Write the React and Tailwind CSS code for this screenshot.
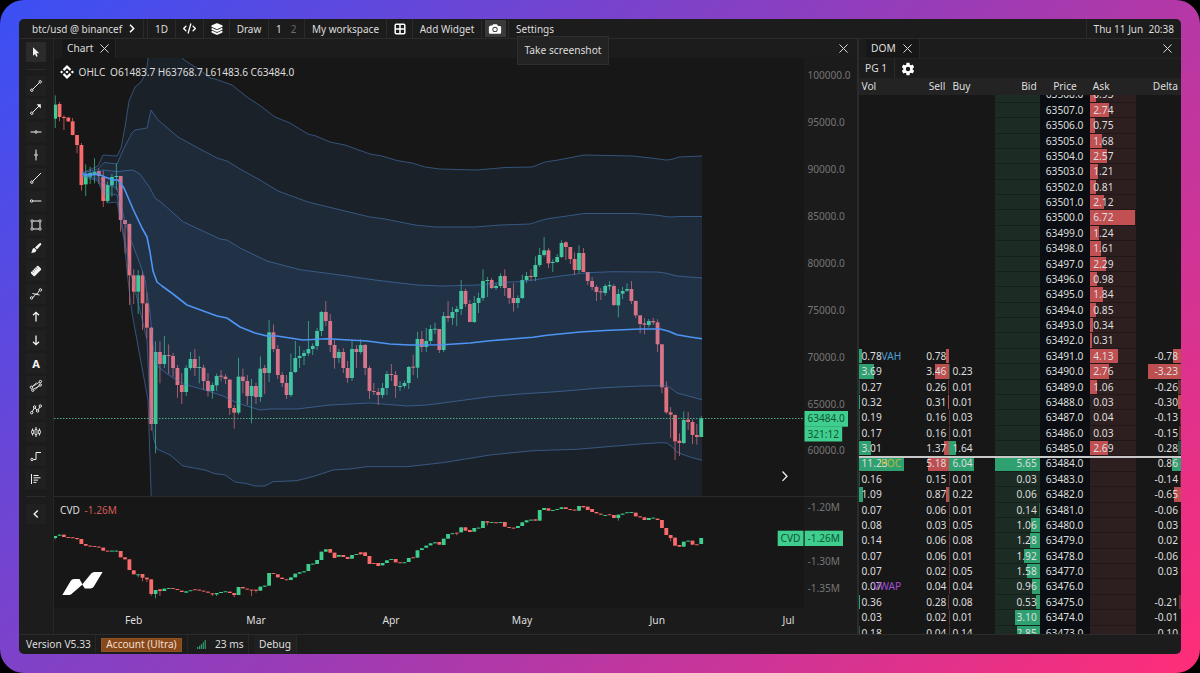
import React from 'react';
import { FaCode } from 'react-icons/fa6';
import { IoCamera, IoLayers, IoSettingsSharp } from 'react-icons/io5';
import { SiBinance } from 'react-icons/si';

const UP = '#3ecf8e';
const DOWN = '#fb6a6b';

// Candles are [open, close, high, low] in thirds of a pixel, grouped by vertical origin.
const shift = (origin, rows) => rows.map((row) => row.map((v) => origin + v / 3));

const CANDLES = [
    ...shift(0, [
        [356, 314, 286, 384], [312, 351, 306, 364], [351, 354, 346, 390], [353, 364, 351, 366],
        [364, 405, 354, 406], [405, 435, 405, 460], [435, 555, 429, 572], [553, 524, 493, 588],
        [530, 519, 500, 552], [525, 515, 475, 550], [513, 528, 505, 552], [531, 603, 512, 621],
        [603, 555, 545, 608], [556, 531, 522, 590], [531, 528, 490, 570], [528, 660, 528, 695],
    ]),
    ...shift(200 , [
        [60, 72, 60, 160], [72, 226, 70, 315], [226, 275, 208, 312], [275, 226, 210, 342],
        [226, 310, 214, 390], [310, 383, 277, 415], [383, 672, 380, 692], [672, 456, 424, 760],
    ]),
    ...shift(280, [
        [216, 252, 184, 310], [252, 225, 168, 264], [225, 228, 193, 282], [228, 264, 219, 290],
        [264, 315, 255, 353], [315, 336, 279, 372], [336, 264, 256, 348], [264, 237, 216, 270],
        [237, 264, 207, 288], [264, 261, 228, 310], [263, 303, 254, 330], [303, 333, 279, 350],
        [333, 315, 308, 356], [316, 288, 281, 333], [287, 290, 270, 304], [290, 297, 283, 312],
        [299, 384, 297, 405], [384, 398, 375, 446], [398, 290, 233, 404], [290, 303, 266, 340],
        [303, 348, 285, 375], [348, 318, 297, 430], [318, 351, 308, 372], [351, 266, 229, 366],
        [264, 279, 255, 342], [279, 157, 120, 306], [157, 207, 133, 216], [207, 285, 195, 297],
        [285, 309, 276, 321], [309, 345, 285, 357], [345, 276, 221, 351], [276, 234, 183, 279],
        [234, 228, 198, 264], [228, 219, 210, 255], [220, 207, 123, 228], [207, 198, 190, 225],
        [198, 153, 144, 210], [153, 96, 93, 168], [96, 123, 63, 138], [123, 195, 102, 216],
        [195, 234, 180, 266], [234, 216, 207, 249], [216, 264, 204, 279], [264, 294, 243, 309],
        [294, 207, 183, 303], [207, 216, 195, 264], [216, 195, 178, 222], [195, 264, 192, 285],
        [264, 333, 257, 357], [333, 336, 309, 345], [336, 345, 324, 375], [345, 324, 309, 354],
        [324, 282, 273, 345], [282, 285, 252, 303], [285, 318, 273, 354], [321, 318, 303, 333],
        [318, 309, 302, 325], [309, 261, 258, 327], [260, 263, 224, 285], [263, 177, 156, 294],
        [177, 201, 153, 216], [201, 183, 144, 216], [183, 147, 135, 192], [149, 146, 128, 162],
        [147, 210, 147, 219], [210, 108, 96, 216],
    ]),
    ...shift(220, [
        [288, 294, 243, 306], [294, 276, 261, 315], [276, 267, 258, 318], [267, 213, 180, 285],
        [213, 252, 206, 260], [252, 306, 240, 306], [306, 249, 228, 309], [249, 234, 218, 279],
        [234, 183, 148, 242], [183, 180, 171, 231], [180, 204, 174, 207], [204, 198, 190, 210],
        [198, 168, 160, 204], [168, 204, 148, 228], [204, 234, 204, 252], [234, 249, 190, 275],
        [249, 234, 226, 264], [234, 180, 164, 237], [180, 168, 156, 189], [168, 171, 148, 183],
        [171, 135, 109, 183], [135, 105, 84, 141], [105, 91, 51, 110], [91, 130, 84, 144],
        [129, 126, 118, 156], [126, 111, 102, 129], [111, 69, 61, 114], [67, 81, 63, 120],
        [81, 117, 81, 132], [117, 150, 97, 165], [150, 99, 76, 160], [99, 156, 84, 156],
        [156, 183, 156, 195], [183, 201, 171, 210], [201, 216, 195, 243], [214, 217, 204, 240],
        [219, 198, 192, 227], [199, 195, 183, 210], [198, 255, 192, 258], [256, 222, 207, 292],
        [221, 213, 201, 237], [212, 207, 190, 216], [207, 243, 183, 252], [243, 286, 241, 294],
        [286, 312, 286, 340], [310, 314, 294, 343], [315, 303, 297, 322], [303, 307, 294, 315],
        [307, 373, 298, 396], [373, 502, 373, 520], [502, 577, 484, 582], [577, 584, 561, 654],
        [585, 664, 583, 720], [662, 669, 640, 708], [669, 600, 574, 672], [599, 606, 576, 630],
        [606, 645, 598, 672], [645, 651, 612, 674], [651, 595, 588, 651],
    ]),
];

// [open, close, low?]
const CVD = [
    [144, 138, 148], [137, 134], [134, 141], [141, 143], [142, 144], [144, 147, 150], [147, 162], [162, 167],
    [167, 169], [168, 170], [170, 172], [173, 182], [182, 184], [184, 182], [184, 182], [183, 202],
    [202, 208], [208, 240], [241, 253], [255, 253, 262], [252, 263, 274], [263, 268, 276], [268, 312, 317], [312, 300, 325],
    [298, 303, 318], [303, 296], [296, 294], [294, 296], [297, 300], [302, 306], [308, 304], [303, 301],
    [298, 300], [299, 301], [302, 304], [305, 308], [310, 313, 318], [313, 309, 318], [309, 306], [306, 304],
    [305, 309], [309, 315, 321], [315, 291], [291, 295], [296, 298], [299, 301, 318], [299, 302, 308], [302, 290],
    [290, 287], [287, 249], [249, 251], [253, 262], [263, 267], [268, 270], [270, 262], [262, 251],
    [251, 247], [247, 244], [243, 222], [223, 221], [222, 210], [210, 185], [185, 178], [177, 188],
    [188, 204], [200, 195], [195, 201], [201, 207], [206, 195], [194, 192], [187, 193], [187, 198],
    [198, 222], [219, 221], [219, 228], [226, 219], [219, 211], [209, 207], [207, 217], [217, 219],
    [219, 217], [216, 204], [202, 204], [203, 181], [180, 175], [173, 167], [166, 160], [160, 157],
    [156, 164], [165, 146], [146, 132], [132, 130], [128, 130, 136], [127, 112], [112, 122], [120, 126],
    [125, 114], [115, 113], [114, 93], [94, 98, 106], [98, 96], [97, 99], [98, 96], [96, 110],
    [111, 113], [113, 115], [114, 108], [108, 97], [97, 91], [91, 89], [88, 92], [92, 60],
    [60, 54], [55, 62], [62, 60], [59, 57], [57, 52], [52, 57], [57, 59], [59, 61],
    [62, 48], [48, 52], [50, 60], [57, 66], [66, 70], [71, 74], [77, 75], [73, 75],
    [75, 84], [84, 74, 92], [74, 71], [69, 67], [68, 66], [68, 79], [79, 82], [82, 90],
    [90, 84], [85, 83], [86, 90], [90, 114], [114, 135], [135, 144, 154], [143, 167], [165, 170],
    [170, 155], [154, 152], [152, 164], [163, 165], [162, 144],
].map(([o, c, low]) => [490 + o / 3, 490 + c / 3, 490 + Math.min(o, c) / 3, 490 + (low ?? Math.max(o, c)) / 3]);

const UPPER_3 = '82,173 98,166 103,155 117,156 121,148 125,127 129,101 135,87 141,82 146,73 148,60 149,30 165,30 184,60 200,70 210,78 215,79 232,85 247,97 262,107 275,117 290,123 308,134 316,136 330,142 345,145 370,154 382,156 397,160.5 412,163 425,167 440,169 477,170 505,167.5 532,167 545,162 558,160 584,155 633,156 655,158.5 666,160 671,159.5 679,157 702,156';
const UPPER_2 = '82,173 98,169 104,162.5 117,164 124,148 132,133 135,130 147,128 151,110 158,120 178,137 200,149 217,158 227,161 240,169 260,180 278,191 308,202 316,204 345,211 370,217 385,219 400,222 415,225 435,227 475,227 500,225 530,224 546,219 560,217 584,213.5 636,213.5 655,215 670,217 680,216.5 702,216.5';
const UPPER_1 = '82,174 98,172 103,170 117,171.5 133,170 140,174 150,188 155,198 162,203 183,221.7 205,232 220,239 227,240 240,248 267,261 300,269.7 340,275 375,280 417,285 443,286 477,285 500,282.5 517,281.7 533,280 560,276 587,272.7 613,271.7 657,272 665,273 677,276 702,278';
const VWAP = '82,174 90,175 98,174 105,177 113,180 118,180 124,188 133,209 142,228 147,237 150,252 153,271 157,282 162,286 173,294 187,305 217,316 227,318 240,327 255,333 267,336 277,336 303,340 327,338.7 367,341 390,344 410,345 443,344.7 470,343 490,340.7 533,337.3 547,335.3 580,332 605,330.5 640,329 660,329 668,331 677,334.7 690,337 702,338.7';
const LOWER_1 = '82,175 98,176 104,184 117,188 125,222 132,243 140,264 145,280 150,313 153,345 156,365 167,374 183,384 205,390 223,396 237,403 260,410 270,409 297,409 330,405 370,403 407,406 427,405 450,402 490,396.7 520,394 557,391.7 600,388 640,386 667,385.7 672,389 677,393 702,399.7';
const LOWER_2 = '82,176 98,179 105,193 117,195 124,236 130,270 135,290 147,340 150,407 154,440 157,449 170,455 183,466 205,470 214,473.5 225,475 235,482 246,483.5 255,486 265,486 273,481.7 297,480.7 315,476 333,470 350,469 367,466.7 407,466.7 443,462.7 490,455 533,450.7 577,449.3 610,446.5 640,444 660,442.7 667,443 672,446.7 677,452.3 690,457 702,460.3';
const LOWER_3 = '82,176 98,181 107,203 117,202 124,240 128,280 132,313 140,357 148,400 150,460 151.3,500';

const reversed = (points) => points.split(' ').reverse().join(' ');

const PRICE_TICKS = ['100000.0', '95000.0', '90000.0', '85000.0', '80000.0', '75000.0', '70000.0', '65000.0', '60000.0'];
const MONTHS = [['Feb', 133.7], ['Mar', 256], ['Apr', 391], ['May', 522], ['Jun', 657.3], ['Jul', 788.5]];

// [price, bid, ask, vol, sell, buy, delta, tag]
const LADDER = [
    ['63508.0', '', '0.93'], ['63507.0', '', '2.74'], ['63506.0', '', '0.75'], ['63505.0', '', '1.68'],
    ['63504.0', '', '2.57'], ['63503.0', '', '1.21'], ['63502.0', '', '0.81'], ['63501.0', '', '2.12'],
    ['63500.0', '', '6.72'], ['63499.0', '', '1.24'], ['63498.0', '', '1.61'], ['63497.0', '', '2.29'],
    ['63496.0', '', '0.98'], ['63495.0', '', '1.84'], ['63494.0', '', '0.85'], ['63493.0', '', '0.34'],
    ['63492.0', '', '0.31'],
    ['63491.0', '', '4.13', '0.78', '0.78', '', '-0.78', 'VAH'],
    ['63490.0', '', '2.76', '3.69', '3.46', '0.23', '-3.23'],
    ['63489.0', '', '1.06', '0.27', '0.26', '0.01', '-0.26'],
    ['63488.0', '', '0.03', '0.32', '0.31', '0.01', '-0.30'],
    ['63487.0', '', '0.04', '0.19', '0.16', '0.03', '-0.13'],
    ['63486.0', '', '0.03', '0.17', '0.16', '0.01', '-0.15'],
    ['63485.0', '', '2.69', '3.01', '1.37', '1.64', '0.28'],
    ['63484.0', '5.65', '', '11.23', '5.18', '6.04', '0.86', 'POC'],
    ['63483.0', '0.03', '', '0.16', '0.15', '0.01', '-0.14'],
    ['63482.0', '0.06', '', '1.09', '0.87', '0.22', '-0.65'],
    ['63481.0', '0.14', '', '0.07', '0.06', '0.01', '-0.06'],
    ['63480.0', '1.06', '', '0.08', '0.03', '0.05', '0.03'],
    ['63479.0', '1.28', '', '0.14', '0.06', '0.08', '0.02'],
    ['63478.0', '1.92', '', '0.07', '0.06', '0.01', '-0.06'],
    ['63477.0', '1.58', '', '0.07', '0.02', '0.05', '0.03'],
    ['63476.0', '0.96', '', '0.07', '0.04', '0.04', '', 'VWAP'],
    ['63475.0', '0.53', '', '0.36', '0.28', '0.08', '-0.21'],
    ['63474.0', '3.10', '', '0.03', '0.02', '0.01', '-0.01'],
    ['63473.0', '2.85', '', '0.18', '0.04', '0.14', '0.10'],
];

const TAG_COLORS = { VAH: 'text-[#4b9fd5]', POC: 'text-[#b9b53c]', VWAP: 'text-[#a04fd8]' };

const dot = (cx, cy) => <circle key={`${cx}-${cy}`} cx={cx} cy={cy} r="1.2" fill="#1f1f1f" />;

const TOOLS = [
    <><path d="M6.6 13.4 13.4 6.6" />{dot(5.8, 14.2)}{dot(14.2, 5.8)}</>,
    <><path d="M6.6 13.4 13.6 6.4" />{dot(5.8, 14.2)}<path d="M10.6 5.2h4.2v4.2z" fill="#f2f2f2" stroke="none" /></>,
    <><path d="M4.6 10h4M11.4 10h4" />{dot(10, 10)}</>,
    <><path d="M10 4.6v4M10 11.4v4" />{dot(10, 10)}</>,
    <><path d="M6.6 13.4 15 5" />{dot(5.8, 14.2)}</>,
    <><path d="M6.4 10h9" />{dot(5.6, 10)}</>,
    <><path d="M6 6h8v8H6z" /><g strokeWidth=".8">{dot(6, 6)}{dot(14, 6)}{dot(6, 14)}{dot(14, 14)}</g></>,
    <g fill="#f2f2f2" stroke="none"><path d="M14.9 5.2c.7.6.3 1.4-.2 2l-3.7 4.2-2-1.8 4.2-4c.5-.5 1.2-.8 1.7-.4z" /><path d="M8.3 10.1l2.1 2c-.1 2-2.2 3-5.5 2.4 1.3-.6 1-1.5 1.500-2.900.4-1 1.200-1.500 1.900-1.500z" /></g>,
    <g transform="rotate(-45 10 10)"><rect x="4.8" y="7.3" width="10.4" height="5.4" rx="1" fill="#f2f2f2" stroke="none" /><path d="M7 7.3v2M9 7.3v2M11 7.3v2M13 7.3v2" stroke="#1f1f1f" strokeWidth=".6" /></g>,
    <><path d="M6.6 13.2c2.4 0 1.6-3.2 3.8-3.2s1.4-3 3.2-3.4M6.5 9.5l7 1.500" />{dot(5.6, 13.9)}{dot(14.4, 5.9)}</>,
    <path d="M10 14.5v-9M7 8.3l3-3 3 3" strokeWidth="1.3" />,
    <path d="M10 5.5v9M7 11.7l3 3 3-3" strokeWidth="1.3" />,
    null,
    <><path d="M5.6 11.2 10.6 6.6M9.2 13.400l4-3.600M5.6 11.200l7.800-5M6.600 13.600l7-3.800" strokeWidth=".8" />{dot(5.4, 11.2)}{dot(14.4, 5.6)}{dot(6.8, 14.2)}{dot(14.2, 9)}</>,
    <><path d="M6.2 12.8 8.6 8.4l3 3.4 2.4-4" />{dot(5.7, 13.6)}{dot(8.6, 8)}{dot(11.6, 12)}{dot(14.3, 7)}</>,
    <><path d="M6.6 6.5v7M10 5v10M13.4 6.5v7" /><path d="M5.6 8.5h2v3h-2zM9 7.500h2v5H9zM12.400 8.500h2v3h-2z" fill="#1f1f1f" strokeWidth=".8" /></>,
    <><path d="M7 13.5h3v-7h5" />{dot(6, 13.5)}</>,
    <path d="M5.5 5v10M7.5 6.5h5M7.5 8.8h7M7.5 11.1h4.500M7.500 13.400h3" />,
];

const ToolButton = ({ children, active }) => (
    <div className={`flex h-5 w-5 shrink-0 items-center justify-center ${active ? 'bg-[#2b2b2b]' : 'bg-[#202020]'}`}>
        {children ?? <span className="text-[11px] font-bold text-neutral-100">A</span>}
    </div>
);

const ToolIcon = ({ children }) => (
    <svg viewBox="0 0 20 20" className="h-5 w-5" fill="none" stroke="#f2f2f2" strokeWidth="1">
        {children}
    </svg>
);

const CloseIcon = ({ className }) => (
    <svg viewBox="0 0 10 10" className={`h-[9px] w-[9px] ${className ?? ''}`} stroke="#dcdcdc" strokeWidth="1.1">
        <path d="M.5.5l9 9M9.5.5l-9 9" />
    </svg>
);

const Candles = ({ data }) => data.map(([open, close, high, low], i) => {
    const x = 55.2 + i * 4.365;
    const color = close < open ? UP : DOWN;
    return (
        <g key={i} fill={color}>
            <rect x={x - 0.4} y={high} width="0.8" height={low - high} opacity="0.85" />
            <rect x={x - 1.9} y={Math.min(open, close)} width="3.8" height={Math.max(Math.abs(close - open), 0.9)} />
        </g>
    );
});

const TopBar = () => (
    <div className="flex h-5 shrink-0 border-b border-[#2b2b2b] text-[10px] text-[#dedede] [&>div]:flex [&>div]:items-center [&>div]:border-r [&>div]:border-[#2b2b2b]">
        <div className="w-[125px] gap-[7px] pl-[13px]">
            btc/usd @ binancef
            <svg viewBox="0 0 6 9" className="h-[9px] w-[6px]" fill="none" stroke="#fff" strokeWidth="1.5">
                <path d="M1 .8l3.700 3.700L1 8.200" />
            </svg>
        </div>
        <div className="w-1" />
        <div className="w-7 justify-center">1D</div>
        <div className="w-7 justify-center text-white"><FaCode size={13} /></div>
        <div className="w-[26px] justify-center text-white"><IoLayers size={14} /></div>
        <div className="w-[39px] justify-center">Draw</div>
        <div className="w-9 gap-[9px] pl-[7px]">1 <span className="text-[#6b6b6b]">2</span></div>
        <div className="w-[82px] justify-center">My workspace</div>
        <div className="w-[26px] justify-center">
            <svg viewBox="0 0 12 12" className="h-3 w-3" fill="none" stroke="#fff" strokeWidth="1.5">
                <rect x="1.2" y="1.2" width="9.6" height="9.6" rx="1" />
                <path d="M6 1v10M1 6h10" />
            </svg>
        </div>
        <div className="w-[69px] justify-center">Add Widget</div>
        <div className="w-[27px] justify-center">
            <span className="flex h-[17px] w-[21px] items-center justify-center bg-[#3a3a3a] text-white"><IoCamera size={14} /></span>
        </div>
        <div className="border-r-0! pl-[7px]">Settings</div>
        <div className="ml-auto border-r-0! border-l pr-[7px] pl-[7px] whitespace-pre">Thu 11 Jun  20:38</div>
    </div>
);

const Sidebar = () => (
    <div className="flex w-[35px] shrink-0 flex-col items-center border-r border-[#272727] pt-[3px]">
        <ToolButton active>
            <ToolIcon><path d="M7 5.200v8.600l2-1.900 1.200 2.900 1.500-.6-1.200-2.900h2.800z" fill="#f2f2f2" stroke="none" /></ToolIcon>
        </ToolButton>
        <div className="my-[6.5px] h-px w-5 bg-[#2b2b2b]" />
        <div className="flex flex-col gap-[3.1px]">
            {TOOLS.map((icon, i) => (
                <ToolButton key={i}>{icon && <ToolIcon>{icon}</ToolIcon>}</ToolButton>
            ))}
        </div>
        <div className="my-[7px] h-px w-5 bg-[#2b2b2b]" />
        <ToolButton>
            <ToolIcon><path d="M11.800 6.400 8.200 10l3.600 3.600" strokeWidth="1.400" /></ToolIcon>
        </ToolButton>
    </div>
);

const PriceChart = () => (
    <svg viewBox="54 58 803 438" className="block h-[438px] w-[803px]">
        <rect x="804" y="58" width="53" height="438" fill="#1b1b1b" />
        <Candles data={CANDLES} />
        <g fill="#4a9eff" fillOpacity=".073">
            <polygon points={`${UPPER_3} 702,500 ${reversed(LOWER_3)}`} />
            <polygon points={`${UPPER_2} ${reversed(LOWER_2)}`} />
            <polygon points={`${UPPER_1} ${reversed(LOWER_1)}`} />
        </g>
        <g fill="none" stroke="#4f82c8" strokeOpacity=".6" strokeWidth=".9">
            {[UPPER_3, UPPER_2, UPPER_1, LOWER_1, LOWER_2, LOWER_3].map((points) => (
                <polyline key={points} points={points} />
            ))}
        </g>
        <polyline points={VWAP} fill="none" stroke="#4d94f5" strokeWidth="1.6" strokeLinejoin="round" />
        <path d="M54 418.5H804" stroke="#4fae82" strokeDasharray="1.5 1.5" strokeWidth="1" />
        <g fontSize="10.1">
            <text x="78.500" y="76" fill="#dedede">OHLC</text>
            <text x="110" y="76" fill="#dedede">O61483.7 H63768.7 L61483.6 C63484.0</text>
            {PRICE_TICKS.map((tick, i) => (
                <text key={tick} x="807.5" y={79.2 + i * 46.9} fill="#757575">{tick}</text>
            ))}
            <rect x="804.5" y="411" width="43.5" height="15.7" fill="#3fce8e" />
            <text x="807.5" y="422.300" fill="#0d5636">63484.0</text>
            <rect x="804.5" y="426.5" width="37.700" height="15" fill="#3fce8e" />
            <text x="807.5" y="437.800" fill="#0d5636">321:12</text>
        </g>
        <path d="M782.5 471.5l4.500 4.700-4.500 4.700" fill="none" stroke="#f2f2f2" strokeWidth="1.3" />
    </svg>
);

const CvdChart = () => (
    <svg viewBox="54 497 803 137" className="block h-[137px] w-[803px]">
        <rect x="804" y="497" width="53" height="137" fill="#1b1b1b" />
        <rect x="54" y="607.5" width="803" height="27" fill="#1b1b1b" />
        <Candles data={CVD} />
        <g fill="#fff">
            <path d="M62.300 595 70.800 580.800Q71.800 579 74 579H79.500L82.500 584.500 71.500 594Q70.500 595 69 595z" />
            <path d="M82.200 584.500 91.200 573.500Q92.400 572 94.500 572H102.600L93.700 586.800Q92.600 588.600 90.500 588.600H84.800z" />
        </g>
        <g fontSize="10.100">
            <text x="60" y="513.600" fill="#dedede">CVD</text>
            <text x="84.500" y="513.600" fill="#cf5b57">-1.26M</text>
            <text x="807.500" y="511.300" fill="#757575">-1.20M</text>
            <text x="807.500" y="565.300" fill="#757575">-1.30M</text>
            <text x="807.500" y="592" fill="#757575">-1.35M</text>
            <rect x="777.700" y="530.700" width="25.800" height="15.300" fill="#3fce8e" />
            <rect x="804.700" y="530.700" width="38.300" height="15.300" fill="#3fce8e" />
            <text x="780.500" y="542.200" fill="#0d5636">CVD</text>
            <text x="807.500" y="542.200" fill="#0d5636">-1.26M</text>
            {MONTHS.map(([name, x]) => (
                <text key={name} x={x} y="624.300" textAnchor="middle" fontSize="10.300" fill="#dedede">{name}</text>
            ))}
        </g>
    </svg>
);

const ChartPanel = () => (
    <div className="relative flex w-[803px] shrink-0 flex-col">
        <div className="flex h-[19px] shrink-0 items-center pl-2">
            <div className="flex h-full w-[54px] items-center gap-[7px] border-r border-[#272727] bg-[#171717] pl-[5px] text-[#dedede]">
                Chart <CloseIcon />
            </div>
            <CloseIcon className="mr-[9px] ml-auto" />
        </div>
        <div className="h-[438px] bg-[#171717]"><PriceChart /></div>
        <div className="border-t border-[#2b2b2b] bg-[#171717]"><CvdChart /></div>
        <SiBinance size={14} className="absolute top-[26px] left-[6px] text-white" />
    </div>
);

// Values too small to fill a pixel only leave a faint edge.
const Bar = ({ value, scale, side, color }) => {
    const size = Math.abs(value);
    return (
        <span
            className={`absolute top-0 bottom-px ${side === 'right' ? 'right-0' : 'left-0'} ${color}`}
            style={{ width: Math.min(Math.max(size * scale, 0.6), 45), opacity: size < 0.3 ? 0.45 : 1 }}
        />
    );
};

const LadderRow = ({ row }) => {
    const [price, bid, ask, vol, sell, buy, delta, tag] = row;
    return (
        <div className="grid h-[15.39px] shrink-0 grid-cols-[45.2px_45.2px_45.2px_45.2px_50.5px_45.5px_1fr] leading-[15px] [&>div]:relative [&>div>b]:relative [&>div>b]:font-normal">
            <div className="pl-[2.5px]">
                {vol > 0.15 && <Bar value={vol} scale={4} side="left" color="bg-[#2fa171]" />}
                <b>{vol}</b>
                {tag && <span className={`absolute right-[3px] ${TAG_COLORS[tag]}`}>{tag}</span>}
            </div>
            <div className="pr-[3px] text-right">
                {sell && <Bar value={sell} scale={4.1} side="right" color="bg-[#bd4f51]" />}
                <b>{sell}</b>
            </div>
            <div className="pl-[3px]">
                {buy > 0.2 && <Bar value={buy} scale={4} side="left" color="bg-[#2fa171]" />}
                <b>{buy}</b>
            </div>
            <div className="bg-[#1c2b24] pr-[3px] text-right shadow-[inset_0_-1px_#16201b]">
                {bid > 0.1 && <Bar value={bid} scale={8} side="right" color="bg-[#2fa171]" />}
                <b>{bid}</b>
            </div>
            <div className="bg-[#0a0e12] pl-[6px]">{price}</div>
            <div className="bg-[#2d1e1f] pl-[3px] shadow-[inset_0_-1px_#201818]">
                {ask > 0.1 && <Bar value={ask} scale={6.7} side="left" color="bg-[#c05052]" />}
                <b>{ask}</b>
            </div>
            <div className="pr-[3px] text-right">
                {(delta < -0.1 || delta > 0.1) && <Bar value={delta} scale={10.2} side="right" color={delta < 0 ? 'bg-[#bd4f51]' : 'bg-[#2fa171]'} />}
                <b>{delta}</b>
            </div>
        </div>
    );
};

const DomPanel = () => (
    <div className="flex min-w-0 flex-1 flex-col border-l-2 border-[#2b2b2b] text-[#dedede]">
        <div className="flex h-[19px] shrink-0 items-center pl-[7px]">
            <div className="flex h-full w-[54px] items-center gap-[7px] border-r border-[#272727] bg-[#171717] pl-[5px]">
                DOM <CloseIcon />
            </div>
            <CloseIcon className="mr-[9px] ml-auto" />
        </div>
        <div className="flex h-5 shrink-0 items-center border-t border-[#222]">
            <div className="flex h-full w-9 items-center border-r border-[#2b2b2b] pl-[6px]">PG 1</div>
            <IoSettingsSharp size={14} className="ml-[6px] text-white" />
        </div>
        <div className="grid h-[17px] shrink-0 grid-cols-[45.2px_45.2px_45.2px_45.2px_50.5px_45.5px_1fr] items-center bg-[#232323]">
            <span className="pl-[2.5px]">Vol</span>
            <span className="pr-[4px] text-right">Sell</span>
            <span className="pl-[3px]">Buy</span>
            <span className="pr-[3px] text-right">Bid</span>
            <span className="text-center">Price</span>
            <span className="pl-[2.5px]">Ask</span>
            <span className="pr-[3px] text-right">Delta</span>
        </div>
        <div className="relative min-h-0 flex-1 overflow-hidden bg-[#171717]">
            <div className="-mt-[7.6px] flex flex-col">
                {LADDER.map((row) => <LadderRow key={row[0]} row={row} />)}
            </div>
            <div className="absolute inset-x-0 top-[361px] h-[1.5px] bg-[#c9c9c9]" />
        </div>
    </div>
);

const StatusBar = () => (
    <div className="flex h-5 shrink-0 items-center border-t border-[#2b2b2b] text-[#dedede]">
        <div className="flex h-full w-[77px] items-center border-r border-[#272727] pl-[7px]">Version V5.33</div>
        <div className="flex h-full w-[92px] items-center border-r border-[#272727] pl-[5px]">
            <span className="flex h-[14px] w-[81px] items-center justify-center border border-[#8f5322] bg-[#87491c] text-[10.1px] text-[#f3dfcc]">Account (Ultra)</span>
        </div>
        <div className="flex h-full w-[61px] items-center gap-[9px] border-r border-[#272727] pl-[9px]">
            <svg viewBox="0 0 9 9" className="h-[9px] w-[9px]" fill="#2f9e6e">
                <path d="M0 7h1.200v2H0zM1.900 5.800h1.200V9H1.900zM3.800 4.200H5V9H3.800zM5.700 2.300h1.200V9H5.700zM7.600 0h1.200v9H7.600z" />
            </svg>
            23 ms
        </div>
        <div className="ml-[5px] flex h-full w-[43px] items-center justify-center border-r border-[#272727] bg-[#202020]">Debug</div>
    </div>
);

export default function App() {
    return (
        <div className="h-[673px] w-[1200px] bg-black">
            <div className="h-full w-full rounded-[24px] bg-[linear-gradient(135deg,#3a50f5_0%,#983cb8_50%,#ff2d78_100%)] px-[19px] pt-[19px]">
                <div className="flex h-[635px] flex-col overflow-hidden rounded-[5px] bg-[#1c1c1c] font-['Noto_Sans',sans-serif] text-[10.2px] leading-none">
                    <TopBar />
                    <div className="flex min-h-0 flex-1">
                        <Sidebar />
                        <ChartPanel />
                        <DomPanel />
                    </div>
                    <StatusBar />
                </div>
            </div>
            <div className="absolute top-[36px] left-[517px] flex h-[29px] w-[92px] items-center justify-center border border-[#2e2e2e] bg-[#232323] font-['Noto_Sans',sans-serif] text-[10.2px] text-[#dedede]">
                Take screenshot
            </div>
        </div>
    );
}
